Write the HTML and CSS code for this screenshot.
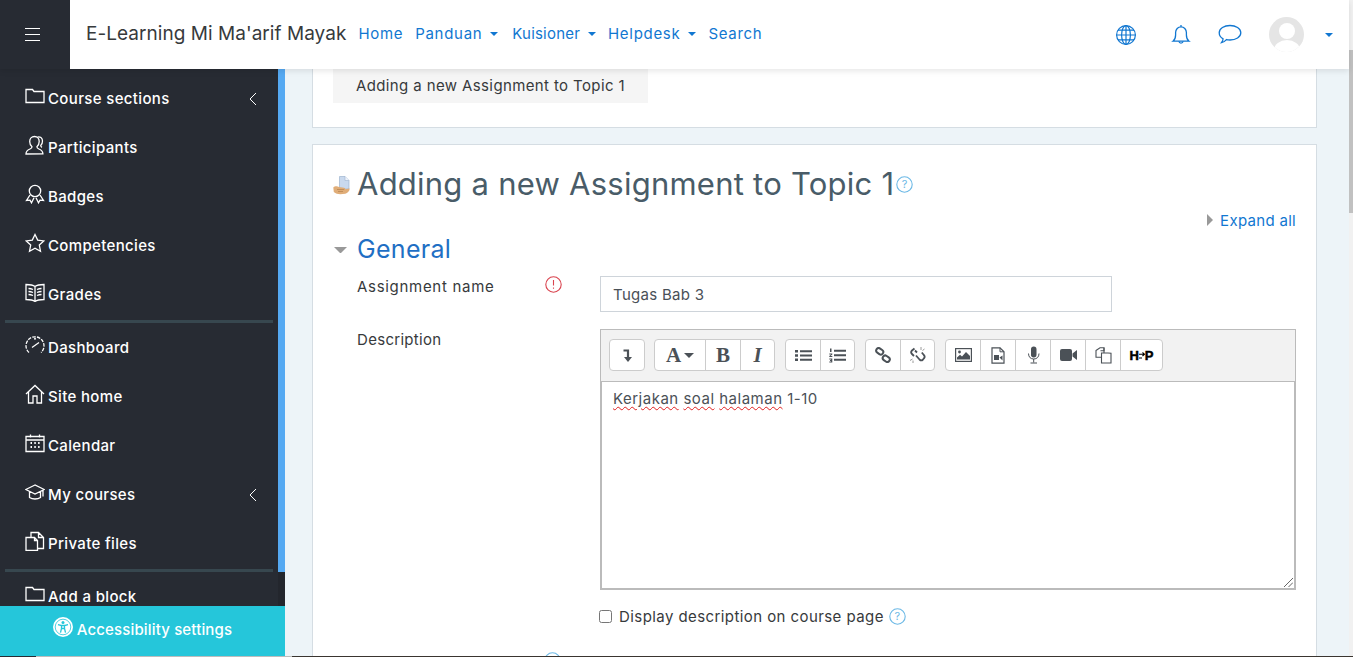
FILE: index.html
```html
<!DOCTYPE html>
<html lang="en">
<head>
<meta charset="utf-8">
<title>Adding a new Assignment to Topic 1</title>
<link rel="stylesheet" href="styles.css">
</head>
<body>
<div class="shell">
  <div class="stage">
    <header class="topbar">
      <button class="burger" aria-label="Menu"><span></span><span></span><span></span></button>
      <div class="navbar">
        <a class="brand">E-Learning Mi Ma'arif Mayak</a>
        <nav class="mainnav">
          <a>Home</a>
          <a class="drop">Panduan</a>
          <a class="drop tight">Kuisioner</a>
          <a class="drop">Helpdesk</a>
          <a>Search</a>
        </nav>
        <div class="usernav">
          <svg class="globe" width="22" height="22" viewBox="0 0 22 22" fill="none" stroke="currentColor" stroke-width="1.2"><circle cx="11" cy="11" r="9.4"/><ellipse cx="11" cy="11" rx="4.4" ry="9.4"/><path d="M11 1.6v18.8M1.6 11h18.8M3 6.2h16M3 15.8h16"/></svg>
          <svg class="bell" width="20" height="22" viewBox="0 0 20 22" fill="none" stroke="currentColor" stroke-width="1.3"><path d="M2 17.2c1.8-1.4 2.6-3 2.6-6.2V8.6C4.600 5.300 7 2.800 10 2.800s5.400 2.500 5.400 5.800V11c0 3.200.8 4.800 2.600 6.200z"/><path d="M10 1v1.800M7.800 17.400a2.300 2.300 0 0 0 4.400 0"/></svg>
          <svg class="bubble" width="24" height="21" viewBox="0 0 24 21" fill="none" stroke="currentColor" stroke-width="1.3"><path d="M12 1.500c5.800 0 10.800 3 10.800 7.300S17.800 16 12 16c-1.300 0-2.500-.1-3.600-.4-1.300 1.500-3 2.700-4.900 3 .9-1 1.500-2.200 1.600-3.800C2.800 13.600 1.200 11.400 1.200 8.800 1.200 4.500 6.200 1.500 12 1.500z"/></svg>
          <svg class="avatar" width="35" height="35" viewBox="0 0 35 35"><defs><clipPath id="av"><circle cx="17.500" cy="17.500" r="17.500"/></clipPath></defs><circle cx="17.500" cy="17.500" r="17.500" fill="#e5e5e5"/><g clip-path="url(#av)" fill="#fff"><circle cx="18" cy="14" r="8"/><ellipse cx="18" cy="33" rx="13" ry="10"/></g></svg>
          <span class="usercaret"></span>
        </div>
      </div>
    </header>

    <div class="workspace">
      <aside class="sidebar">
        <div class="rail"><div class="rail-fill"></div></div>
        <div class="drawer">
          <a class="item"><svg class="ico" viewBox="0 0 20 20"><path d="M1 3.500h6.500l1.500 2h10v11H1z"/></svg><span>Course sections</span><svg class="chev" viewBox="0 0 8 14"><path d="M7 1 1 7l6 6"/></svg></a>
          <a class="item"><svg class="ico" viewBox="0 0 20 20"><path d="M1 19c0-3 1.500-4 4-5 1.500-.6 2-1.300 2-2.200-1.600-1.200-2.300-3-2.300-5.300C4.700 3.500 6.600 1.500 9.500 1.500s4.700 2 4.700 5c0 2.300-.8 4-2.300 5.300 0 1 .5 1.600 2 2.200 2.500 1 4 2 4 4.800z"/><path d="M12.500 2c2.500-.8 5 1 5 4 0 2-.6 3.500-1.800 4.600 0 .8.300 1.300 1.300 1.800"/></svg><span>Participants</span></a>
          <a class="item"><svg class="ico" viewBox="0 0 20 20"><circle cx="10" cy="7" r="5.700"/><path d="M5 11 1.500 16.500l3.500-.3 1.500 2.600 2.500-5M15 11l3.500 5.500-3.500-.3-1.500 2.600-2.500-5"/></svg><span>Badges</span></a>
          <a class="item"><svg class="ico" viewBox="0 0 20 20"><path d="m10 1.500 2.700 5.600 6.100.8-4.500 4.200 1.200 6.100L10 15.200l-5.500 3 1.200-6.100-4.500-4.200 6.100-.8z"/></svg><span>Competencies</span></a>
          <a class="item"><svg class="ico" viewBox="0 0 20 20"><path d="M10 4.500C8 3 4.500 2.500 1 2.500v15c3.500 0 7 .5 9 2 2-1.500 5.500-2 9-2v-15c-3.500 0-7 .5-9 2zM10 4.500v15M3.500 6.500c1.500 0 3 .3 4.500 1M3.500 9.500c1.500 0 3 .3 4.500 1M3.500 12.500c1.500 0 3 .3 4.500 1M16.500 6.500c-1.500 0-3 .3-4.500 1M16.500 9.500c-1.500 0-3 .3-4.500 1M16.500 12.500c-1.500 0-3 .3-4.500 1"/></svg><span>Grades</span></a>
          <div class="rule"></div>
          <a class="item"><svg class="ico" viewBox="0 0 20 20"><path d="M4 17.500A9 9 0 1 1 16 17.500" stroke-dasharray="3.500 1.200"/><path d="M7 12.500 14 7.500"/><circle cx="10" cy="3.800" r=".4"/></svg><span>Dashboard</span></a>
          <a class="item"><svg class="ico" viewBox="0 0 20 20"><path d="M1 10 10 1.500 19 10M3.500 8v11h4.500v-7h4v7h4.500V8"/></svg><span>Site home</span></a>
          <a class="item"><svg class="ico" viewBox="0 0 20 20"><path d="M1 3.500h18v15H1zM1 7h18M5.500 1.500v3M14.500 1.500v3"/><path class="dots" d="M5.500 10h1.500M9.300 10h1.500M13.100 10h1.500M5.500 14h1.500M9.300 14h1.500M13.100 14h1.500"/></svg><span>Calendar</span></a>
          <a class="item"><svg class="ico" viewBox="0 0 20 20"><path d="M10 3 .8 7.500 10 12l9.200-4.500zM4.500 9.500v6c3 2 8 2 11 0v-6M18 8.500v6"/></svg><span>My courses</span><svg class="chev" viewBox="0 0 8 14"><path d="M7 1 1 7l6 6"/></svg></a>
          <a class="item"><svg class="ico" viewBox="0 0 20 20"><path d="M1 6.500h8.500l3 3v10H1zM9.500 6.500v3h3M6 6.500v-5h7.500l5 5v11h-6M13.500 1.500v5h5"/></svg><span>Private files</span></a>
          <div class="rule"></div>
          <a class="item"><svg class="ico" viewBox="0 0 20 20"><path d="M1 3.500h6.500l1.500 2h10v11H1z"/></svg><span>Add a block</span></a>
        </div>
        <a class="a11y"><svg class="a11y-ico" width="20" height="20" viewBox="0 0 20 20"><circle cx="10" cy="10" r="10" fill="#fff"/><circle cx="10" cy="10" r="7.800" fill="none" stroke="#25c6da" stroke-width=".8"/><circle cx="10" cy="5.600" r="1.500" fill="#25c6da"/><path d="M5 7.700l3.500.8v3l-1 4.200M15 7.700l-3.500.8v3l1 4.200M8.500 8.500h3v3h-3z" fill="none" stroke="#25c6da" stroke-width="1.300"/></svg><span>Accessibility settings</span></a>
      </aside>

      <main class="content">
        <section class="card card-top">
          <div class="crumb">Adding a new Assignment to Topic 1</div>
        </section>
        <section class="card card-form">
          <div class="title-row">
            <svg class="modicon" width="17" height="19" viewBox="0 0 17 19"><path d="M6.500.5h5.500l4 4V13H6.500z" fill="#c9d9ee" stroke="#9db4d0" stroke-width=".7"/><path d="M12 .5v4h4" fill="#eef3fa" stroke="#9db4d0" stroke-width=".6"/><path d="M.3 11.500c1.800-1.600 4-1.300 5.700-.6l5 .8c1.500.2 1.500 1.400.4 1.600l1.800-.3 3.300-.5c.6 1.900-1.500 4.200-4.200 5.200l-5 .6c-2.700-.1-4.500-.8-6.500-2.300z" fill="#e0ad78"/><path d="M4 13.500h7.300M5 15.500h5" stroke="#b5834f" stroke-width=".7"/></svg>
            <h1>Adding a new Assignment to Topic 1</h1>
            <svg class="help help-title" width="17" height="17" viewBox="0 0 17 17"><circle cx="8.500" cy="8.500" r="7.700"/><text x="8.500" y="12.300" text-anchor="middle">?</text></svg>
          </div>
          <div class="expand-row"><span class="tri-right"></span><a>Expand all</a></div>
          <h2 class="legend"><span class="tri-down"></span>General</h2>

          <div class="frow frow-name">
            <label class="flabel">Assignment name<svg class="req" width="17" height="17" viewBox="0 0 17 17"><circle cx="8.500" cy="8.500" r="7.700"/><path d="M8.500 4v5.500M8.500 11.500v1.200"/></svg></label>
            <input class="textin" type="text" value="Tugas Bab 3">
          </div>

          <div class="frow frow-desc">
            <label class="flabel desc-label">Description</label>
            <div class="editor">
              <div class="toolbar">
                <div class="group"><button class="tb tb-a"><svg width="12" height="15" viewBox="0 0 12 15"><path d="M2.500 2.500h4.500v8" fill="none" stroke="#4b5157" stroke-width="2.200"/><path d="M3 9h8l-4 5z" fill="#4b5157"/></svg></button></div>
                <div class="group">
                  <button class="tb tb-font"><span class="serif-a">A</span><span class="mini-caret"></span></button>
                  <button class="tb serif-b">B</button>
                  <button class="tb serif-i">I</button>
                </div>
                <div class="group">
                  <button class="tb"><svg width="17" height="13" viewBox="0 0 17 13" fill="#4b5157"><path d="M0 1h3v2.500H0zM0 5.200h3v2.500H0zM0 9.500h3V12H0zM5 1.300h12v2H5zM5 5.500h12v2H5zM5 9.800h12v2H5z"/></svg></button>
                  <button class="tb"><svg width="17" height="15" viewBox="0 0 17 15" fill="#4b5157"><path d="M5 1.800h12v2H5zM5 6.300h12v2H5zM5 10.800h12v2H5z"/><path d="M1 .5h1.500v3.500H1zM.3 5.500h3v1l-1.800 1.500h1.800v1h-3V8l1.800-1.500H.3zM.3 10.500h3v4h-3v-1h1.800v-.5H1v-1h1.100V11.500H.3z"/></svg></button>
                </div>
                <div class="group">
                  <button class="tb"><svg width="16" height="16" viewBox="0 0 16 16" fill="none" stroke="#4b5157" stroke-width="2"><rect x="1" y="1.800" width="7.500" height="5" rx="2.500" transform="rotate(35 4.700 4.300)"/><rect x="7.500" y="9.200" width="7.500" height="5" rx="2.500" transform="rotate(35 11.200 11.700)"/></svg></button>
                  <button class="tb"><svg width="17" height="18" viewBox="0 0 17 18" fill="none" stroke="#4b5157" stroke-width="1.800"><path d="M5.500 2.500 3 4.500a2.500 2.500 0 0 0 0 3.500l2 2M7 9.500l3.500 4a2.500 2.500 0 0 0 3.500 0l.8-1a2.500 2.500 0 0 0 0-3.500l-2-2.500M6 4.500l2 2"/><path d="M12 1v3M15.500 3l-2 1.500M1 14.500l2.500-1.500M4 17v-2.500" stroke="#9a9a9a" stroke-width="1"/></svg></button>
                </div>
                <div class="group">
                  <button class="tb"><svg width="17" height="14" viewBox="0 0 17 14"><rect x=".6" y=".6" width="15.800" height="12.800" fill="none" stroke="#4b5157" stroke-width="1.200"/><path d="M2 11.500v-2l3-2.800 2 1.800 4-4.500 4 4v3.500z" fill="#4b5157"/><circle cx="4.500" cy="4" r="1.400" fill="#4b5157"/></svg></button>
                  <button class="tb"><svg width="14" height="17" viewBox="0 0 14 17"><path d="M1 .8h8l4 4v11.400H1z" fill="none" stroke="#4b5157" stroke-width="1.200"/><path d="M9 .8v4h4" fill="none" stroke="#4b5157"/><rect x="3" y="8" width="5" height="5" fill="#4b5157"/><path d="m8.500 10.500 3-2v5z" fill="#4b5157"/></svg></button>
                  <button class="tb"><svg width="13" height="18" viewBox="0 0 13 18"><rect x="4" y=".5" width="5.500" height="11" rx="2.700" fill="#4b5157"/><path d="M1.500 7.500c0 3.500 2 5.500 5.200 5.500S12 11 12 7.500M6.700 13v3.500M3.500 17h6.500" fill="none" stroke="#4b5157" stroke-width="1"/></svg></button>
                  <button class="tb"><svg width="17" height="12" viewBox="0 0 17 12" fill="#4b5157"><rect y="0" width="12" height="12" rx="2"/><path d="m12.500 4.500 4.500-3.500v10l-4.500-3.500z"/></svg></button>
                  <button class="tb"><svg width="17" height="17" viewBox="0 0 17 17" fill="#fff" stroke="#4b5157" stroke-width="1.100"><path d="M1 3.500 5 .8h4v9.500H1z"/><path d="M6.500 6H13l3 .2V16H6.500z"/><path d="M9 .8v3H5.500" fill="none"/></svg></button>
                  <button class="tb tb-h5p"><span>H</span><svg width="6" height="9" viewBox="0 0 6 9" fill="none" stroke="#000" stroke-width="1.100"><path d="M0 3.200h5M3.500 1.500 5.500 3.200 3.500 5M0 7h3"/></svg><span>P</span></button>
                </div>
              </div>
              <div class="editarea"><u>Kerjakan</u> <u>soal</u> <u>halaman</u> 1-10<svg class="grip" width="9" height="9" viewBox="0 0 9 9" fill="none" stroke="#555" stroke-width=".9"><path d="M0 9 9 0M4.500 9 9 4.500"/></svg></div>
            </div>
          </div>

          <div class="frow frow-check">
            <span></span>
            <label class="checkline"><input type="checkbox"><span>Display description on course page</span><svg class="help help-check" width="17" height="17" viewBox="0 0 17 17"><circle cx="8.500" cy="8.500" r="7.700"/><text x="8.500" y="12.300" text-anchor="middle">?</text></svg></label>
          </div>
          <div class="frow frow-next">
            <span class="next-icon"><svg class="help" width="17" height="17" viewBox="0 0 17 17"><circle cx="8.500" cy="8.500" r="7.700"/></svg></span>
          </div>
        </section>
      </main>
    </div>
  </div>
  <div class="scrollbar"><div class="thumb"></div></div>
</div>
<div class="edge"><span class="edge-a"></span><span class="edge-b"></span><span class="edge-c"></span></div>
</body>
</html>
```

FILE: styles.css
```css
* { box-sizing: border-box; }
html, body { margin: 0; height: 657px; overflow: hidden; }
body { font-family: Inter, "Liberation Sans", sans-serif; font-size: 15px; color: #373a3c; background: #fff; }
a { color: inherit; text-decoration: none; }
button { font: inherit; }

.shell { display: grid; grid-template-columns: 1fr 4px; height: 656px; }
.stage { display: flex; flex-direction: column; min-width: 0; height: 656px; }
.scrollbar { background: #f1f1f1; padding-top: 50px; }
.thumb { height: 163px; background: #c1c1c1; }

.edge { display: flex; height: 1px; }
.edge-a { width: 36px; background: #272b33; }
.edge-b { width: 256px; background: #bdbdbd; }
.edge-c { flex: 1; background: #3a3530; }

.topbar { display: flex; height: 69px; flex: none; position: relative; z-index: 3; box-shadow: 0 2px 6px rgba(0,0,0,.1); }
.burger { width: 70px; background: #272b33; border: 0; padding: 0 0 0 25px; display: flex; flex-direction: column; align-items: flex-start; justify-content: center; gap: 4.500px; }
.burger span { display: block; width: 15px; height: 1.500px; background: #fff; }
.navbar { flex: 1; display: flex; align-items: center; background: #fff; padding-left: 16px; }
.brand { font-size: 19px; letter-spacing: .04px; white-space: nowrap; color: #373a3c; margin-top: -2px; }
.mainnav { display: flex; align-items: center; gap: 12px; margin: -2px 0 0 12px; color: #1177d1; font-size: 15px; letter-spacing: .7px; }
.tight { letter-spacing: .2px; margin-left: 2px; }
.drop::after { content: ""; display: inline-block; margin-left: 8px; vertical-align: 3px; border-top: 4px solid currentColor; border-left: 4px solid transparent; border-right: 4px solid transparent; }
.usernav { margin-left: auto; display: flex; align-items: center; color: #1177d1; padding-right: 16px; }
.bell { margin-left: 34px; }
.bubble { margin-left: 27px; margin-top: -1px; }
.avatar { margin-left: 27px; }
.usercaret { margin-left: 21px; border-top: 4px solid currentColor; border-left: 4.500px solid transparent; border-right: 4.500px solid transparent; }

.workspace { flex: 1; display: flex; min-height: 0; background: #edf4f8; }
.sidebar { width: 285px; flex: none; display: flex; flex-direction: row-reverse; position: relative; background: #23262d; overflow: hidden; }
.rail { width: 7px; flex: none; }
.rail-fill { height: 503px; background: #55a9f2; }
.drawer { flex: 1; background: #272b33; padding-top: 5px; color: #fff; overflow: hidden; }
.item { height: 49px; display: flex; align-items: center; padding: 0 21px 0 25px; gap: 3px; font-size: 15px; font-weight: 500; letter-spacing: .35px; }
.ico { width: 20px; height: 20px; flex: none; margin-top: -5px; fill: none; stroke: #fff; stroke-width: 1.300; }
.ico .dots { stroke-width: 2; }
.chev { width: 8px; height: 14px; margin-left: auto; fill: none; stroke: #fff; stroke-width: 1; }
.rule { height: 3px; margin: 1px 5px 0; background: #37474f; }
.a11y { position: absolute; left: 0; bottom: 0; width: 285px; height: 50px; padding-bottom: 4px; background: #25c6da; color: #fff; display: flex; align-items: center; justify-content: center; gap: 4px; font-size: 15px; font-weight: 500; letter-spacing: .15px; }
.a11y-ico { margin-top: -4px; }

.content { flex: 1; min-width: 0; padding: 0 32px 0 27px; overflow: hidden; }
.card { background: #fff; border: 1px solid #d5dde3; }
.card-top { height: 59px; border-top: 0; padding-left: 20px; }
.crumb { display: inline-block; height: 34px; line-height: 34px; padding: 0 23px; background: #f5f5f5; font-size: 15px; letter-spacing: .38px; }
.card-form { margin-top: 16px; padding: 20px 20px 0; height: 600px; }

.title-row { display: flex; align-items: center; height: 38px; }
.modicon { flex: none; margin-top: 3px; }
h1 { margin: 0 0 0 7px; font-size: 31px; line-height: 38px; font-weight: 400; letter-spacing: .24px; color: #495c68; white-space: nowrap; }
.help { flex: none; fill: none; stroke: #6cb9e6; stroke-width: 1.100; }
.help text { fill: #6cb9e6; stroke: none; font-size: 11px; font-family: Inter, sans-serif; }
.help-title { margin: 1px 0 0 2px; }

.expand-row { display: flex; align-items: center; justify-content: flex-end; gap: 7px; height: 20px; margin-top: 7px; color: #1177d1; font-size: 15px; letter-spacing: .3px; }
.tri-right { border-left: 6px solid #999; border-top: 6px solid transparent; border-bottom: 6px solid transparent; }
.legend { display: flex; align-items: center; margin: 4px 0 0; height: 30px; font-size: 25px; letter-spacing: .3px; font-weight: 400; color: #1f6fc4; }
.tri-down { width: 13px; margin: 2px 10px 0 1px; border-top: 6px solid #999; border-left: 6.500px solid transparent; border-right: 6.500px solid transparent; }

.frow { display: grid; grid-template-columns: 267px 696px; }
.frow-name { margin-top: 12px; }
.frow-desc { margin-top: 17px; }
.frow-check { margin-top: 16px; }
.frow-next { margin-top: 26px; }
.flabel { display: flex; align-items: flex-start; padding: 1px 0 0 24px; line-height: 20px; letter-spacing: .7px; }
.desc-label { letter-spacing: .3px; }
.req { margin: -1px 38px 0 auto; fill: none; stroke: #d9434e; stroke-width: 1.100; }
.textin { width: 512px; height: 36px; padding: 0 12px; border: 1px solid #ced4da; font: inherit; letter-spacing: .3px; color: #495057; background: #fff; outline: 0; }

.editor { width: 696px; height: 261px; border: 1px solid #bbb; display: flex; flex-direction: column; }
.toolbar { height: 51px; flex: none; display: flex; gap: 10px; padding: 9px 0 0 8px; background: #f2f2f2; }
.group { display: flex; height: 32px; border: 1px solid #ccc; border-radius: 4px; background: #fff; }
.group:first-child { margin-right: -1px; }
.tb { width: 35px; height: 30px; padding: 0; border: 0; border-left: 1px solid #ccc; background: transparent; display: flex; align-items: center; justify-content: center; color: #4b5157; }
.tb:first-child { width: 34px; border-left: 0; }
.tb:last-child { width: 34px; }
.tb.tb-font { width: 50px; gap: 3px; }
.serif-a, .serif-b, .serif-i { font-family: "Liberation Serif", serif; font-size: 21px; font-weight: 700; }
.serif-i { font-style: italic; }
.mini-caret { border-top: 5px solid #4b5157; border-left: 5px solid transparent; border-right: 5px solid transparent; }
.tb.tb-h5p { width: 42px; font-family: "Liberation Sans", sans-serif; font-size: 13px; font-weight: 700; color: #000; -webkit-text-stroke: .5px #000; gap: 0; }
.editarea { flex: 1; position: relative; border: 1px solid #bbb; padding: 7px 11px; line-height: 20px; letter-spacing: .5px; color: #4b5157; background: #fff; }
.editarea u { text-decoration: underline wavy #e02020 1px; text-underline-offset: 2px; }
.grip { position: absolute; right: 1px; bottom: 1px; }

.checkline { display: flex; align-items: center; height: 20px; white-space: nowrap; letter-spacing: .42px; }
.checkline input { width: 13px; height: 13px; margin: 0 7px 0 -1px; }
.help-check { margin-left: 5px; }
.next-icon { padding-left: 211px; }
```
